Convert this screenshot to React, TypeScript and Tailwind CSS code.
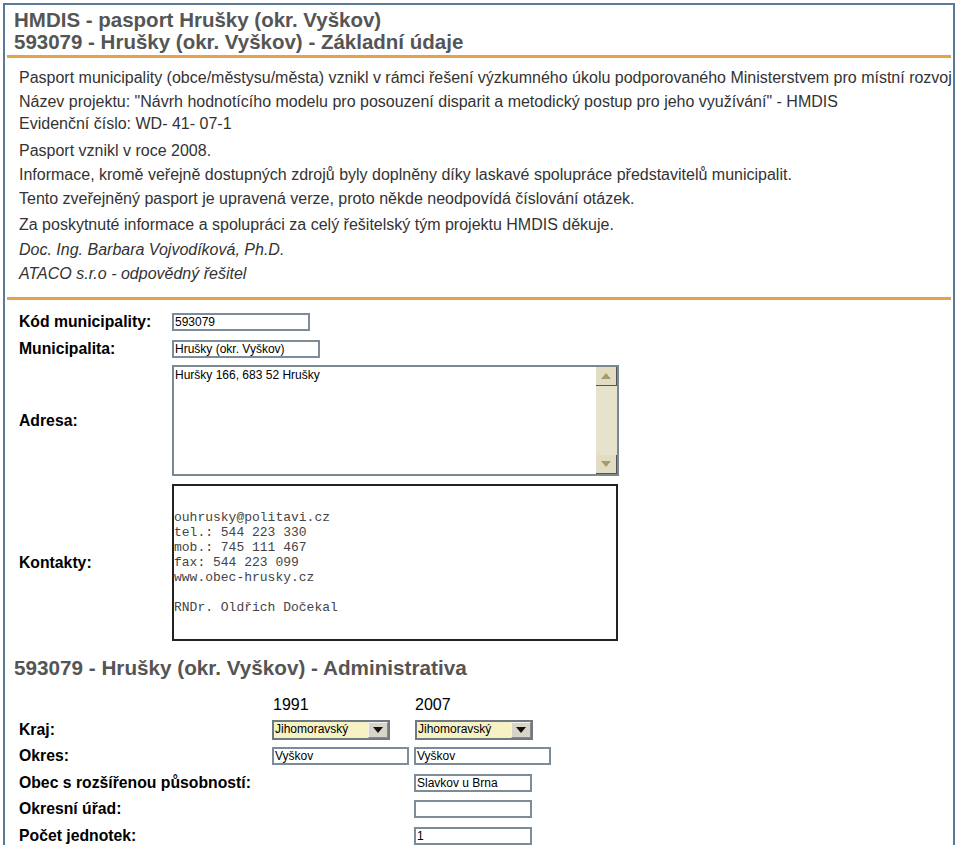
import React from "react";

const font = { fontFamily: '"Liberation Sans", Arial, sans-serif' };

function TextInput({ value, w }: { value: string; w: string }) {
  return (
    <div
      className={`h-[18px] ${w} border-2 border-[#7d8c98] bg-white text-[12px] leading-[14px] text-black pl-[1px] overflow-hidden whitespace-nowrap`}
    >
      {value}
    </div>
  );
}

function Select({ value }: { value: string }) {
  return (
    <div className="h-[20px] w-[118px] border-2 border-[#6f7a80] bg-[#f6f2c6] flex items-center text-[12px] text-black">
      <span className="flex-1 pl-[1px] leading-[14px] -mt-[3px]">{value}</span>
      <span className="w-[20px] h-[16px] bg-[#d8d4c8] border-l border-t border-[#f4f2ea] border-r-[#888] border-b-[#888] border-r border-b flex items-center justify-center">
        <svg width="10" height="6" viewBox="0 0 10 6">
          <path d="M0 0 L10 0 L5 6 Z" fill="#111" />
        </svg>
      </span>
    </div>
  );
}

export default function App() {
  return (
    <div className="bg-white w-[960px] h-[845px] overflow-hidden text-[#333]" style={font}>
      <div className="ml-[3px] mt-[3px] w-[952px] border-2 border-[#5a7a98] border-b-0 pb-10">
        {/* header */}
        <div className="pl-[9px] pt-[4px] text-[20.5px] font-bold leading-[22px] text-[#555]">
          <div>HMDIS - pasport Hrušky (okr. Vyškov)</div>
          <div>593079 - Hrušky (okr. Vyškov) - Základní údaje</div>
        </div>
        <div className="mx-[2px] mt-[2px] h-[3px] bg-[#e5a24a]" />

        {/* intro */}
        <div className="pl-[14px] pt-[8px] text-[16px] text-[#333]">
          <div className="h-[24px] leading-[24px] whitespace-nowrap">
            Pasport municipality (obce/městysu/města) vznikl v rámci řešení výzkumného úkolu podporovaného Ministerstvem pro místní rozvoj
          </div>
          <div className="h-[22px] leading-[24px]">
            Název projektu: "Návrh hodnotícího modelu pro posouzení disparit a metodický postup pro jeho využívání" - HMDIS
          </div>
          <div className="h-[27px] leading-[24px]">Evidenční číslo: WD- 41- 07-1</div>
          <div className="h-[24px] leading-[24px]">Pasport vznikl v roce 2008.</div>
          <div className="h-[24px] leading-[24px]">
            Informace, kromě veřejně dostupných zdrojů byly doplněny díky laskavé spolupráce představitelů municipalit.
          </div>
          <div className="h-[26px] leading-[24px]">
            Tento zveřejněný pasport je upravená verze, proto někde neodpovídá číslování otázek.
          </div>
          <div className="h-[25px] leading-[24px]">
            Za poskytnuté informace a spolupráci za celý řešitelský tým projektu HMDIS děkuje.
          </div>
          <div className="h-[24px] leading-[24px] italic">Doc. Ing. Barbara Vojvodíková, Ph.D.</div>
          <div className="h-[24px] leading-[24px] italic">ATACO s.r.o - odpovědný řešitel</div>
        </div>
        <div className="mx-[2px] mt-[11px] h-[3px] bg-[#e5a24a]" />

        {/* base form */}
        <div className="pl-[14px] pt-[13px] text-black">
          <div className="flex items-center h-[18px]">
            <div className="w-[153px] text-[15.75px] font-bold">Kód municipality:</div>
            <TextInput value="593079" w="w-[138px]" />
          </div>
          <div className="flex items-center h-[18px] mt-[9px]">
            <div className="w-[153px] text-[15.75px] font-bold">Municipalita:</div>
            <TextInput value="Hrušky (okr. Vyškov)" w="w-[148px]" />
          </div>
          <div className="flex items-center mt-[7px]">
            <div className="w-[153px] text-[15.75px] font-bold">Adresa:</div>
            <div className="w-[447px] h-[111px] border-2 border-[#7a8890] bg-white flex">
              <div className="flex-1 text-[12px] leading-[14px] pl-[1px] pt-[1px]">Huršky 166, 683 52 Hrušky</div>
              <div className="w-[21px] bg-[#e6e2cc] flex flex-col justify-between">
                <div className="h-[19px] bg-[#e2ddc2] border-r border-b border-[#555] flex items-center justify-center">
                  <svg width="10" height="6" viewBox="0 0 10 6">
                    <path d="M0 6 L10 6 L5 0 Z" fill="#a89a6a" />
                  </svg>
                </div>
                <div className="h-[19px] bg-[#e2ddc2] border-r border-b border-[#555] flex items-center justify-center">
                  <svg width="10" height="6" viewBox="0 0 10 6">
                    <path d="M0 0 L10 0 L5 6 Z" fill="#a89a6a" />
                  </svg>
                </div>
              </div>
            </div>
          </div>
          <div className="flex items-center mt-[8px]">
            <div className="w-[153px] text-[15.75px] font-bold">Kontakty:</div>
            <div
              className="w-[446px] h-[157px] border-2 border-[#222] bg-white text-[13px] leading-[15px] text-[#444] pt-[24px] whitespace-pre"
              style={{ fontFamily: '"Liberation Mono", "Courier New", monospace' }}
            >
              {"ouhrusky@politavi.cz\ntel.: 544 223 330\nmob.: 745 111 467\nfax: 544 223 099\nwww.obec-hrusky.cz\n\nRNDr. Oldřich Dočekal"}
            </div>
          </div>
        </div>

        {/* admin */}
        <div className="pl-[9px] mt-[15px] text-[20.7px] font-bold leading-[24px] text-[#555]">
          593079 - Hrušky (okr. Vyškov) - Administrativa
        </div>
        <div className="pl-[14px] pt-[15px] text-black">
          <div className="flex h-[20px] items-center text-[16px]">
            <div className="w-[254px]" />
            <div className="w-[142px]">1991</div>
            <div>2007</div>
          </div>
          <div className="flex h-[20px] items-center mt-[5px]">
            <div className="w-[253px] text-[15.75px] font-bold">Kraj:</div>
            <div className="w-[143px]">
              <Select value="Jihomoravský" />
            </div>
            <Select value="Jihomoravský" />
          </div>
          <div className="flex h-[18px] items-center mt-[7px]">
            <div className="w-[253px] text-[15.75px] font-bold">Okres:</div>
            <div className="w-[142px]">
              <TextInput value="Vyškov" w="w-[137px]" />
            </div>
            <TextInput value="Vyškov" w="w-[137px]" />
          </div>
          <div className="flex h-[18px] items-center mt-[9px]">
            <div className="w-[395px] text-[15.75px] font-bold">Obec s rozšířenou působností:</div>
            <TextInput value="Slavkov u Brna" w="w-[118px]" />
          </div>
          <div className="flex h-[18px] items-center mt-[8px]">
            <div className="w-[395px] text-[15.75px] font-bold">Okresní úřad:</div>
            <TextInput value="" w="w-[118px]" />
          </div>
          <div className="flex h-[18px] items-center mt-[9px]">
            <div className="w-[395px] text-[15.75px] font-bold">Počet jednotek:</div>
            <TextInput value="1" w="w-[118px]" />
          </div>
        </div>
      </div>
    </div>
  );
}
